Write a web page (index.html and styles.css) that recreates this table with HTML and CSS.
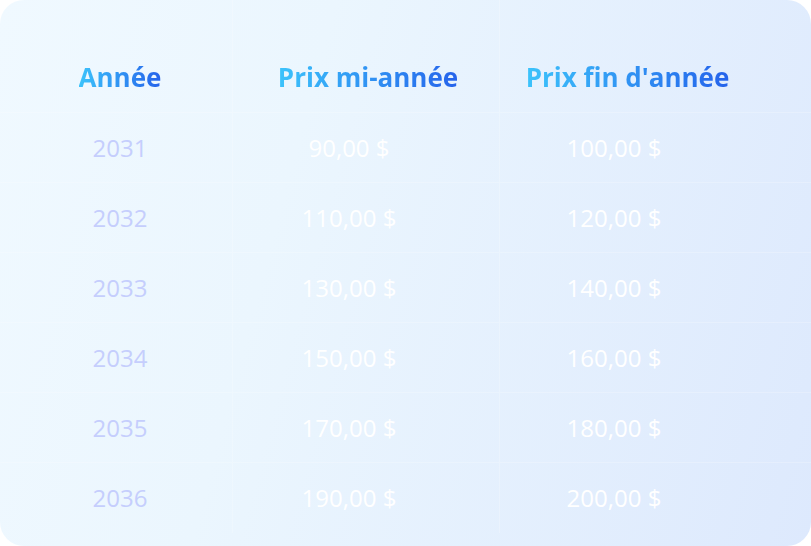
FILE: index.html
```html
<!DOCTYPE html>
<html lang="fr">
<head>
<meta charset="utf-8">
<title>Prix</title>
<link rel="stylesheet" href="styles.css">
</head>
<body>
<div class="card">
  <div class="row head">
    <div class="cell c1"><span class="grad">Année</span></div>
    <div class="cell c2"><span class="grad">Prix mi-année</span></div>
    <div class="cell c3"><span class="grad">Prix fin d'année</span></div>
  </div>
  <div class="row">
    <div class="cell c1 year">2031</div>
    <div class="cell c2 price">90,00 $</div>
    <div class="cell c3 price">100,00 $</div>
  </div>
  <div class="row">
    <div class="cell c1 year">2032</div>
    <div class="cell c2 price">110,00 $</div>
    <div class="cell c3 price">120,00 $</div>
  </div>
  <div class="row">
    <div class="cell c1 year">2033</div>
    <div class="cell c2 price">130,00 $</div>
    <div class="cell c3 price">140,00 $</div>
  </div>
  <div class="row">
    <div class="cell c1 year">2034</div>
    <div class="cell c2 price">150,00 $</div>
    <div class="cell c3 price">160,00 $</div>
  </div>
  <div class="row">
    <div class="cell c1 year">2035</div>
    <div class="cell c2 price">170,00 $</div>
    <div class="cell c3 price">180,00 $</div>
  </div>
  <div class="row last">
    <div class="cell c1 year">2036</div>
    <div class="cell c2 price">190,00 $</div>
    <div class="cell c3 price">200,00 $</div>
  </div>
</div>
</body>
</html>
```

FILE: styles.css
```css
html, body {
  margin: 0;
  padding: 0;
  background: #ffffff;
}

.card {
  width: 811px;
  height: 546px;
  border-radius: 24px;
  overflow: hidden;
  background: linear-gradient(105deg, #f0f9ff 0%, #ebf6fe 35%, #dde9fd 100%);
  font-family: "Open Sans", "Noto Sans", sans-serif;
  display: flex;
  flex-direction: column;
}

.row {
  display: grid;
  grid-template-columns: 233px 267px 1fr;
  height: 70px;
  box-sizing: border-box;
  border-bottom: 1px solid rgba(255, 255, 255, 0.22);
  flex: none;
}

.row.last {
  border-bottom: none;
}

.row.head {
  height: 113px;
}

.cell {
  display: flex;
  align-items: center;
  justify-content: center;
  border-right: 1px solid rgba(255, 255, 255, 0.22);
  box-sizing: border-box;
}

.cell.c3 {
  border-right: none;
}

.head .cell {
  align-items: flex-start;
  padding-top: 59px;
}

.grad {
  font-family: "Open Sans", "Noto Sans", sans-serif;
  font-weight: 700;
  font-size: 26px;
  line-height: 36px;
  background: linear-gradient(90deg, #3cc3fb, #2563eb);
  -webkit-background-clip: text;
  background-clip: text;
  color: transparent;
}

.head .c1 { padding-left: 8px; }
.head .c2 { padding-left: 4px; }
.head .c3 { padding-right: 56px; }

.year, .price {
  font-size: 24px;
  line-height: 32px;
  font-weight: 400;
}

.year {
  color: #c5cefd;
  padding-left: 8px;
}

.price {
  color: #ffffff;
}

.price.c2 { padding-right: 34px; }
.price.c3 { padding-right: 83px; }
```
